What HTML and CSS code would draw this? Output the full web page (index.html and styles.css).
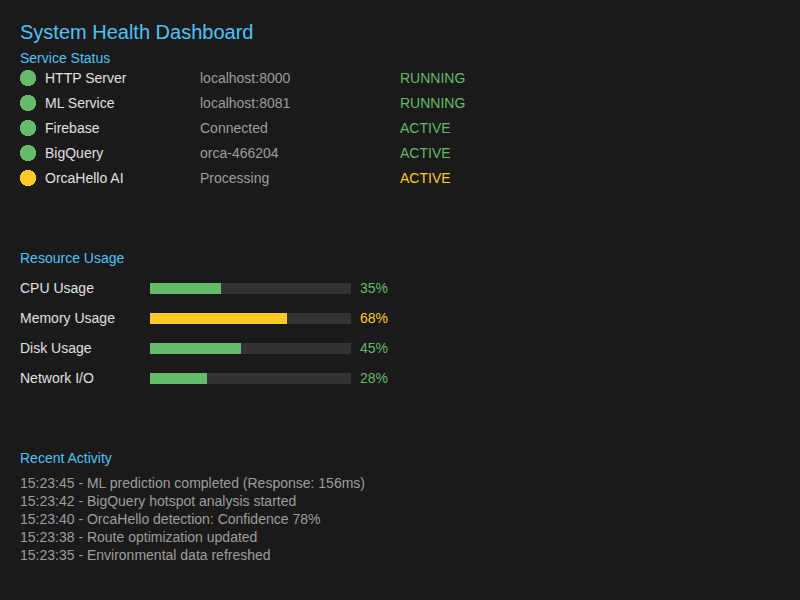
FILE: index.html
```html
<!DOCTYPE html>
<html lang="en">
<head>
<meta charset="utf-8">
<title>System Health Dashboard</title>
<link rel="stylesheet" href="styles.css">
</head>
<body>
<main class="dashboard">
  <h1 class="title">System Health Dashboard</h1>
  <section class="services">
    <h2 class="heading">Service Status</h2>
    <table class="service-table">
      <tbody>
        <tr class="ok"><th scope="row"><span class="service"><svg class="dot"><use href="#disc"/></svg>HTTP Server</span></th><td>localhost:8000</td><td class="state">RUNNING</td></tr>
        <tr class="ok"><th scope="row"><span class="service"><svg class="dot"><use href="#disc"/></svg>ML Service</span></th><td>localhost:8081</td><td class="state">RUNNING</td></tr>
        <tr class="ok"><th scope="row"><span class="service"><svg class="dot"><use href="#disc"/></svg>Firebase</span></th><td>Connected</td><td class="state">ACTIVE</td></tr>
        <tr class="ok"><th scope="row"><span class="service"><svg class="dot"><use href="#disc"/></svg>BigQuery</span></th><td>orca-466204</td><td class="state">ACTIVE</td></tr>
        <tr class="warn"><th scope="row"><span class="service"><svg class="dot"><use href="#disc"/></svg>OrcaHello AI</span></th><td>Processing</td><td class="state">ACTIVE</td></tr>
      </tbody>
    </table>
  </section>
  <section class="resources">
    <h2 class="heading">Resource Usage</h2>
    <div class="meters">
      <div class="meter ok"><span>CPU Usage</span><div class="track"><div class="fill" style="width:71px"></div></div><span class="state">35%</span></div>
      <div class="meter warn"><span>Memory Usage</span><div class="track"><div class="fill" style="width:137px"></div></div><span class="state">68%</span></div>
      <div class="meter ok"><span>Disk Usage</span><div class="track"><div class="fill" style="width:91px"></div></div><span class="state">45%</span></div>
      <div class="meter ok"><span>Network I/O</span><div class="track"><div class="fill" style="width:57px"></div></div><span class="state">28%</span></div>
    </div>
  </section>
  <section class="activity">
    <h2 class="heading">Recent Activity</h2>
    <ul class="log">
      <li>15:23:45 - ML prediction completed (Response: 156ms)</li>
      <li>15:23:42 - BigQuery hotspot analysis started</li>
      <li>15:23:40 - OrcaHello detection: Confidence 78%</li>
      <li>15:23:38 - Route optimization updated</li>
      <li>15:23:35 - Environmental data refreshed</li>
    </ul>
  </section>
</main>
<svg class="symbols" width="0" height="0" aria-hidden="true">
  <symbol id="disc" viewBox="0 0 16 16"><path shape-rendering="crispEdges" d="M5 0h6v1h2v1h1v1h1v2h1v6h-1v2h-1v1h-1v1h-2v1H5v-1H3v-1H2v-1H1v-2H0V5h1V3h1V2h1V1h2z"/></symbol>
</svg>
</body>
</html>
```

FILE: styles.css
```css
* { box-sizing: border-box; }
body {
  margin: 0;
  background: #1a1a1a;
  color: #e0e0e0;
  font: 14px/20px "Liberation Sans", Arial, sans-serif;
}
.dashboard { padding: 20px; }
.title {
  margin: 0 0 4px;
  color: #4fc3f7;
  font-size: 20px;
  font-weight: 400;
  line-height: 24px;
}
.heading {
  margin: 0;
  color: #4fc3f7;
  font-size: 14px;
  font-weight: 400;
}
.ok { --status: #66bb6a; }
.warn { --status: #ffca28; }
.service-table {
  border-collapse: collapse;
  table-layout: fixed;
  width: 580px;
  max-width: 100%;
}
.service-table th, .service-table td {
  width: 200px;
  height: 25px;
  padding: 0 0 5px;
  text-align: left;
  font-weight: 400;
  color: #9e9e9e;
}
.service-table th { width: 180px; color: #e0e0e0; }
.service-table .state, .state { color: var(--status); }
.service { display: flex; align-items: center; gap: 9px; }
.dot { width: 16px; height: 16px; fill: var(--status); }
.resources { margin-top: 55px; }
.meters { display: grid; gap: 10px; margin-top: 10px; }
.meter {
  display: grid;
  grid-template-columns: 130px 201px auto;
  justify-content: start;
  align-items: center;
}
.meter .state { padding-left: 9px; }
.track { height: 11px; background: #333; }
.fill { height: 100%; background: var(--status); }
.activity { margin-top: 60px; }
.log {
  margin: 6px 0 0;
  padding: 0;
  list-style: none;
  color: #9e9e9e;
  line-height: 18px;
}
.symbols { display: block; }
```
